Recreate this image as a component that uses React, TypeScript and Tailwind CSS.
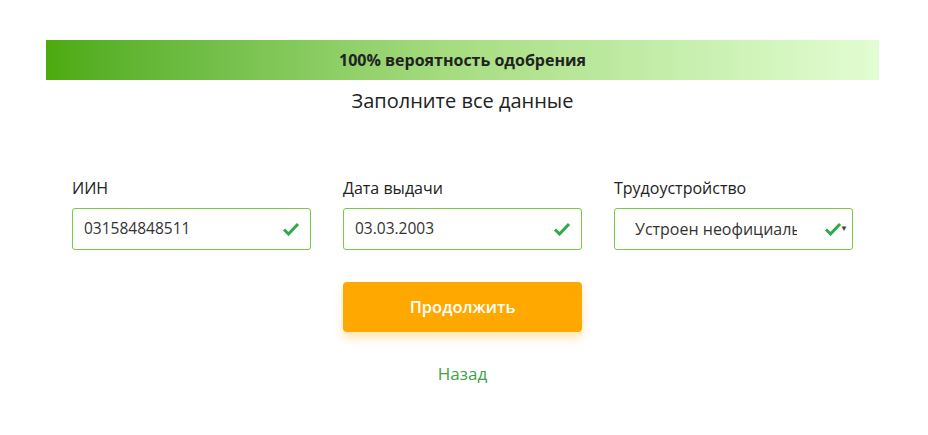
function Field({ label, value, select }: { label: string; value: string; select?: boolean }) {
  return (
    <div className="flex w-[239px] flex-col">
      <label className="mb-[8px] text-[16px] leading-[23px] text-[#222]">{label}</label>
      <div className="relative flex h-[42px] items-center rounded-[3px] border border-[#7ac943] bg-white">
        <span
          className={`${select ? "w-[182px] pl-[20px] text-[16px]" : "w-[200px] pl-[11px] text-[15.5px]"} overflow-hidden whitespace-nowrap text-[#333]`}
        >
          {value}
        </span>
        <svg className="absolute right-[10px] top-[13px]" width="18" height="14" viewBox="0 0 18 14">
          <path d="M2 7.5 L6.5 12 L16 2" fill="none" stroke="#2eaa4a" strokeWidth="3" />
        </svg>
        {select && <span className="absolute right-[4px] top-[13px] text-[8px] text-[#444]">▼</span>}
      </div>
    </div>
  );
}

export default function App() {
  return (
    <div className="flex min-h-[435px] w-full justify-center bg-white pr-[3px] pt-10 font-['Open_Sans',sans-serif]">
      <div className="flex w-[833px] flex-col items-center">
        <div className="flex h-10 w-full items-center justify-center bg-gradient-to-r from-[#4caa0c] via-[#a8de82] to-[#e2fdd2] text-[16px] font-bold text-[#222]">
          100% вероятность одобрения
        </div>
        <h2 className="mt-[8px] text-[20px] leading-[26px] text-[#222]">Заполните все данные</h2>
        <div className="mt-[63px] flex gap-8">
          <Field label="ИИН" value="031584848511" />
          <Field label="Дата выдачи" value="03.03.2003" />
          <Field label="Трудоустройство" value="Устроен неофициально" select />
        </div>
        <button className="mt-8 h-[50px] w-[239px] rounded-[4px] bg-[#ffa800] text-[16.5px] font-semibold text-white shadow-[0_6px_10px_rgba(255,168,0,0.3)]">
          Продолжить
        </button>
        <a className="mt-[29px] text-[17px] text-[#43a047]">Назад</a>
      </div>
    </div>
  );
}
